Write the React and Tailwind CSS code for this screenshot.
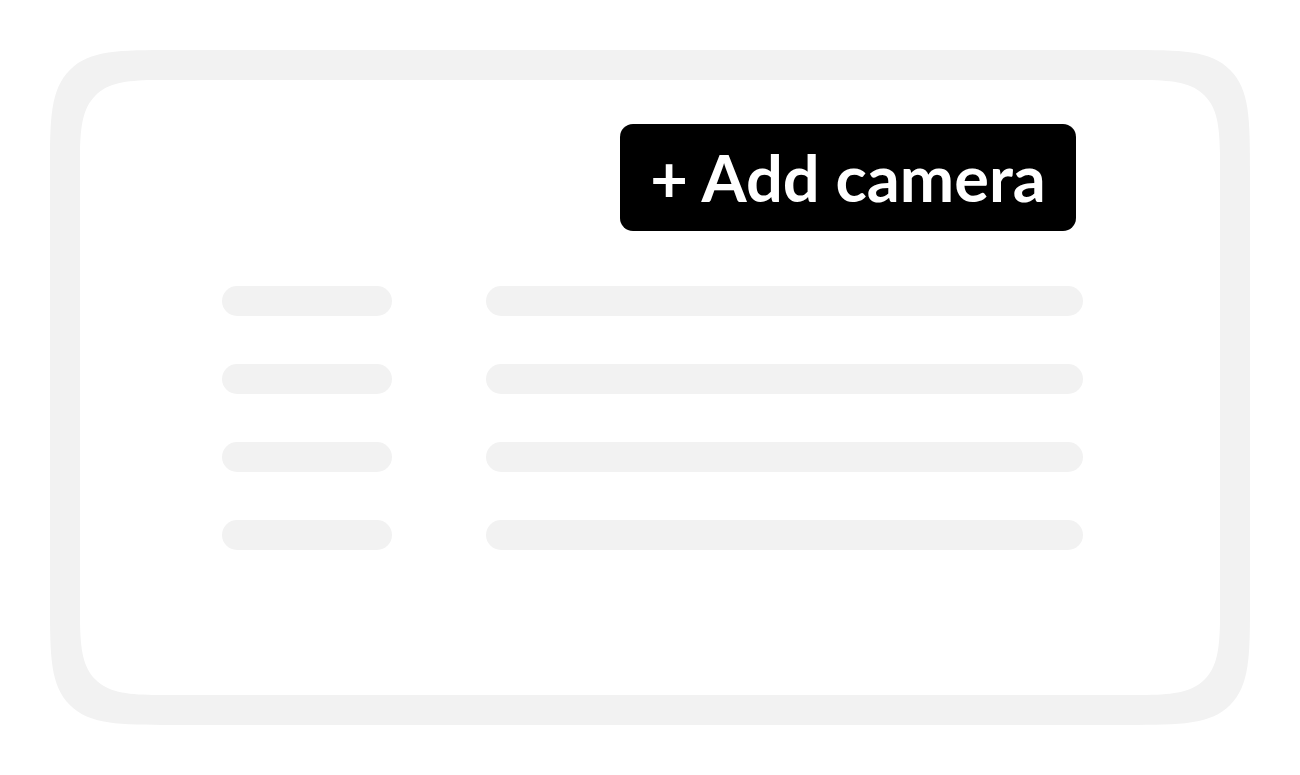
export default function App() {
  const rows = [0, 1, 2, 3];
  return (
    <div className="w-[1300px] h-[775px] bg-white pt-[50px] pl-[50px]" style={{ fontFamily: "Lato, 'Noto Sans', sans-serif" }}>
      <div className="w-[1200px] h-[675px] border-[30px] border-[#f2f2f2] rounded-[125px] [corner-shape:squircle] bg-white">
        <div className="pt-[44px]">
          <div className="ml-[540px] w-[456px] h-[107px] bg-black rounded-[13px] flex items-center justify-center">
            <span className="text-white font-bold text-[65px] leading-none">+ Add camera</span>
          </div>
          <div className="mt-[55px] ml-[142px] flex flex-col gap-[48px]">
            {rows.map((r) => (
              <div key={r} className="flex gap-[94px]">
                <div className="w-[170px] h-[30px] rounded-full bg-[#f2f2f2]" />
                <div className="w-[597px] h-[30px] rounded-full bg-[#f2f2f2]" />
              </div>
            ))}
          </div>
        </div>
      </div>
    </div>
  );
}
